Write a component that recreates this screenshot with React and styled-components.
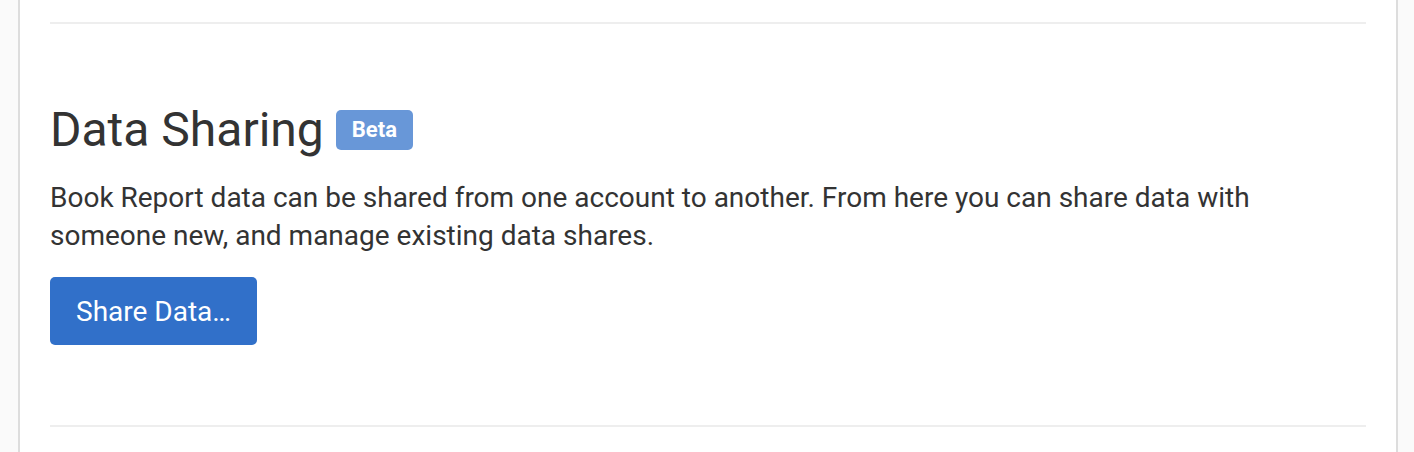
import React from 'react';
import styled, { createGlobalStyle } from 'styled-components';

const GlobalStyle = createGlobalStyle`
  body {
    margin: 0;
    background: #fafafa;
    font-family: Roboto, "Liberation Sans", sans-serif;
    color: #333;
  }
`

const Page = styled.div`
  padding: 0 16px 0 18px;
`

const Panel = styled.div`
  background: #fff;
  border-left: 2px solid #ddd;
  border-right: 2px solid #ddd;
  padding: 22px 30px 40px;
`

const Rule = styled.hr`
  border: 0;
  height: 2px;
  background: #eee;
  margin: 0;
`

const Section = styled.section`
  padding: 77px 0 80px;
`

const TitleRow = styled.div`
  display: flex;
  align-items: center;
  gap: 12px;
`

const Title = styled.h2`
  margin: 0;
  font-size: 48px;
  font-weight: 400;
  line-height: 57.6px;
  color: #333;
`

const Badge = styled.span`
  display: inline-flex;
  align-items: center;
  height: 40px;
  padding: 0 16px;
  border-radius: 5px;
  background: #6897d8;
  color: #fff;
  font-size: 22px;
  font-weight: 700;
`

const Description = styled.p`
  margin: 20px 0 0;
  max-width: 1240px;
  font-size: 28px;
  line-height: 38.4px;
  color: #333;
`

const Button = styled.button`
  margin-top: 22px;
  height: 68px;
  padding: 0 26px;
  border: 0;
  border-radius: 5px;
  background: ${props => props.primary ? '#3170c9' : '#eee'};
  color: ${props => props.primary ? '#fff' : '#333'};
  font-family: inherit;
  font-size: 28px;
  cursor: pointer;
`

const App = () => {
  return (
    <Page>
      <GlobalStyle />
      <Panel>
        <Rule />
        <Section>
          <TitleRow>
            <Title>Data Sharing</Title>
            <Badge>Beta</Badge>
          </TitleRow>
          <Description>
            Book Report data can be shared from one account to another. From here you can share data with someone new, and manage existing data shares.
          </Description>
          <Button primary>Share Data…</Button>
        </Section>
        <Rule />
      </Panel>
    </Page>
  );
}

export default App;
